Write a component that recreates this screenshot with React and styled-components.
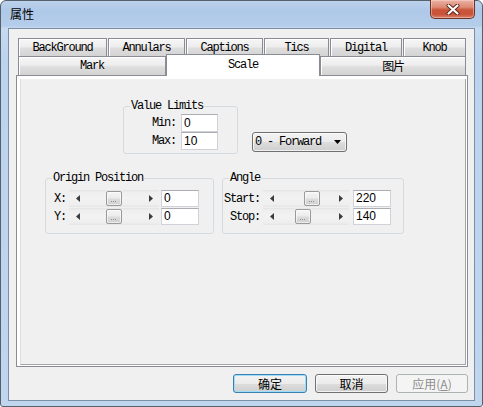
import React from 'react';
import styled, { createGlobalStyle } from 'styled-components';

const MONO = `"Liberation Mono", "Noto Sans CJK SC", monospace`;
const CJK = `"Noto Sans CJK SC", "Liberation Sans", sans-serif`;
const SANS = `"Liberation Sans", Arial, sans-serif`;

const Global = createGlobalStyle`
  html, body { margin: 0; padding: 0; background: #fff; }
  body { width: 483px; height: 407px; overflow: hidden; font-family: ${MONO}; }
  * { box-sizing: border-box; }
`;

const Window = styled.div`
  width: 483px;
  height: 407px;
  border: 1px solid #56606c;
  border-radius: 6px 6px 3px 3px;
  background: linear-gradient(180deg, #bcd2ec 0px, #aec8e7 10px, #b4cdea 25px, #c6daf0 27px, #bcd3ee 60px, #c0d6ef 100%);
  padding: 0 7px 5px 7px;
  display: flex;
  flex-direction: column;
`;

const TitleBar = styled.div`
  height: 27px;
  display: flex;
  align-items: flex-start;
  justify-content: space-between;
`;

const TitleText = styled.div`
  font-family: ${CJK};
  font-size: 12px;
  line-height: 26px;
  padding-left: 2px;
  color: #000;
`;

const CloseButton = styled.div`
  width: 45px;
  height: 19px;
  margin-top: -1px;
  border: 1px solid #6b3326;
  border-top: none;
  border-radius: 0 0 5px 5px;
  background: linear-gradient(180deg, #eab3a6 0%, #dc8a74 40%, #c95538 55%, #c9533a 80%, #d9826b 100%);
  box-shadow: inset 0 0 0 1px rgba(255, 220, 210, 0.45);
  display: flex;
  align-items: center;
  justify-content: center;
`;

const Client = styled.div`
  flex: 1;
  border: 1px solid #7d8fa6;
  background: #f0f0f0;
  display: flex;
  flex-direction: column;
  padding: 9px 0 0 7px;
`;

const TabStrip = styled.div`
  width: 452px;
  padding-left: 2px;
  display: flex;
  flex-direction: column;
`;

const TabRow = styled.div`
  display: flex;
  gap: ${(p) => p.$gap}px;
  height: ${(p) => p.$h}px;
  align-items: flex-start;
`;

const Tab = styled.div`
  width: ${(p) => p.$w}px;
  height: ${(p) => (p.$selected ? p.$h + 3 : p.$h)}px;
  margin-top: ${(p) => (p.$selected ? -2 : 0)}px;
  position: ${(p) => (p.$selected ? 'relative' : 'static')};
  z-index: ${(p) => (p.$selected ? 2 : 'auto')};
  border: 1px solid #898c95;
  border-bottom: none;
  background: ${(p) =>
    p.$selected
      ? '#ffffff'
      : 'linear-gradient(180deg, #f6f6f6 0%, #ededed 45%, #dedede 55%, #d3d3d3 100%)'};
  box-shadow: ${(p) => (p.$selected ? 'none' : 'inset 1px 1px 0 #fff')};
  display: flex;
  align-items: center;
  justify-content: center;
  font-family: ${MONO};
  font-size: 12px;
  letter-spacing: -1.2px;
  color: #000;
  padding-bottom: ${(p) => (p.$selected ? 1 : 0)}px;
`;

const Panel = styled.div`
  width: 452px;
  height: 292px;
  border: 1px solid #898c95;
  background: #fff;
  padding: 3px 1px 1px 3px;
  display: flex;
`;

const Page = styled.div`
  flex: 1;
  background: #f0f0f0;
  border-left: 1px solid #dcdcdc;
  border-right: 1px solid #a4a4a4;
  border-bottom: 1px solid #a4a4a4;
  display: flex;
  flex-direction: column;
`;

const PageRow = styled.div`
  display: flex;
  align-items: flex-end;
  gap: ${(p) => p.$gap}px;
  padding-left: ${(p) => p.$left}px;
  margin-top: ${(p) => p.$top}px;
`;

const Group = styled.fieldset`
  margin: 0;
  padding: 0;
  min-width: 0;
  width: ${(p) => p.$w}px;
  border: 1px solid #d5dadf;
  border-radius: 3px;
`;

const Legend = styled.legend`
  margin-left: 6px;
  padding: 0 1px;
  font-family: ${MONO};
  font-size: 12px;
  letter-spacing: -1.2px;
  line-height: 14px;
  color: #000;
`;

const GroupBody = styled.div`
  display: flex;
  flex-direction: column;
  gap: ${(p) => p.$gap}px;
  padding: ${(p) => p.$pad};
`;

const FieldRow = styled.div`
  display: flex;
  align-items: center;
  height: ${(p) => p.$h}px;
`;

const Label = styled.span`
  width: ${(p) => p.$w}px;
  margin-right: ${(p) => p.$gap}px;
  text-align: right;
  font-family: ${MONO};
  font-size: 12px;
  letter-spacing: -1.2px;
  white-space: nowrap;
  color: #000;
`;

const Edit = styled.div`
  width: ${(p) => p.$w}px;
  height: ${(p) => p.$h}px;
  margin-left: ${(p) => p.$gap || 0}px;
  background: #fff;
  border: 1px solid #cfd2d8;
  border-top-color: #abadb3;
  font-family: ${SANS};
  font-size: 12px;
  line-height: ${(p) => p.$h - 2}px;
  padding-left: 2px;
  color: #000;
`;

const Scroll = styled.div`
  width: ${(p) => p.$w}px;
  height: 17px;
  display: flex;
  align-items: center;
  background: linear-gradient(180deg, #e4e4e4 0%, #efefef 15%, #f2f2f2 50%, #efefef 85%, #e4e4e4 100%);
`;

const ScrollArrow = styled.div`
  width: 17px;
  height: 17px;
  display: flex;
  align-items: center;
  justify-content: center;
`;

const ScrollTrack = styled.div`
  flex: 1;
  height: 17px;
  display: flex;
  align-items: center;
`;

const Thumb = styled.div`
  width: 16px;
  height: 15px;
  border: 1px solid #9a9a9a;
  border-radius: 2px;
  background: linear-gradient(180deg, #f5f5f5 0%, #ececec 45%, #dcdcdc 55%, #d0d0d0 100%);
  box-shadow: inset 0 0 0 1px rgba(255, 255, 255, 0.6);
  display: flex;
  align-items: flex-end;
  justify-content: center;
  padding-bottom: 3px;
`;

const Grip = styled.div`
  width: 6px;
  height: 1px;
  background: repeating-linear-gradient(90deg, #8f8f8f 0 1px, transparent 1px 2px);
`;

const Combo = styled.div`
  width: 95px;
  height: 20px;
  margin-bottom: 2px;
  border: 1px solid #707070;
  border-radius: 3px;
  background: linear-gradient(180deg, #f3f3f3 0%, #ebebeb 50%, #dddddd 50%, #cfcfcf 100%);
  box-shadow: inset 0 0 0 1px rgba(255, 255, 255, 0.7);
  display: flex;
  align-items: center;
  justify-content: space-between;
  padding: 0 5px 0 2px;
  font-family: ${MONO};
  font-size: 12px;
  letter-spacing: -1.2px;
  color: #000;
`;

const ButtonRow = styled.div`
  width: 452px;
  margin-top: 7px;
  display: flex;
  justify-content: flex-end;
  gap: 8px;
`;

const Button = styled.div`
  width: ${(p) => p.$w}px;
  height: 19px;
  border-radius: 3px;
  border: 1px solid ${(p) => (p.$default ? '#3c7fb1' : p.$disabled ? '#adb2b5' : '#707070')};
  background: ${(p) =>
    p.$disabled
      ? '#f4f4f4'
      : 'linear-gradient(180deg, #f3f3f3 0%, #ebebeb 50%, #dddddd 50%, #cfcfcf 100%)'};
  box-shadow: ${(p) =>
    p.$default
      ? 'inset 0 0 0 1px #9fdcf8'
      : p.$disabled
      ? 'none'
      : 'inset 0 0 0 1px rgba(255,255,255,0.7)'};
  display: flex;
  align-items: center;
  justify-content: center;
  font-family: ${CJK};
  font-size: 12px;
  line-height: 17px;
  color: ${(p) => (p.$disabled ? '#8d8d8d' : '#000')};
`;

const Arrow = ({ dir }) => (
  <svg width="4" height="7" viewBox="0 0 4 7">
    {dir === 'left' ? (
      <polygon points="4,0 4,7 0,3.5" fill="#3c3c3c" />
    ) : (
      <polygon points="0,0 0,7 4,3.5" fill="#3c3c3c" />
    )}
  </svg>
);

const ScrollBar = ({ w, value, min, max }) => {
  const trackLen = w - 34 - 16;
  const offset = Math.round(((value - min) / (max - min)) * trackLen);
  return (
    <Scroll $w={w}>
      <ScrollArrow>
        <Arrow dir="left" />
      </ScrollArrow>
      <ScrollTrack>
        <Thumb style={{ marginLeft: offset }}>
          <Grip />
        </Thumb>
      </ScrollTrack>
      <ScrollArrow>
        <Arrow dir="right" />
      </ScrollArrow>
    </Scroll>
  );
};

const row1 = [
  ['BackGround', 89],
  ['Annulars', 77],
  ['Captions', 77],
  ['Tics', 65],
  ['Digital', 72],
  ['Knob', 63],
];
const row2 = [
  ['Mark', 148, false],
  ['Scale', 154, true],
  ['图片', 146, false],
];

export default function App() {
  return (
    <>
      <Global />
      <Window>
        <TitleBar>
          <TitleText>属性</TitleText>
          <CloseButton>
            <svg width="14" height="11" viewBox="0 0 14 11">
              <path d="M2.5 1.5 L11.5 9.5 M11.5 1.5 L2.5 9.5" stroke="#5a2418" strokeWidth="4" strokeLinecap="round" />
              <path d="M2.5 1.5 L11.5 9.5 M11.5 1.5 L2.5 9.5" stroke="#ffffff" strokeWidth="2.2" strokeLinecap="round" />
            </svg>
          </CloseButton>
        </TitleBar>
        <Client>
          <TabStrip>
            <TabRow $h={18} $gap={1}>
              {row1.map(([t, w]) => (
                <Tab key={t} $w={w} $h={18}>
                  {t}
                </Tab>
              ))}
            </TabRow>
            <TabRow $h={19} $gap={0}>
              {row2.map(([t, w, sel]) => (
                <Tab key={t} $w={w} $h={19} $selected={sel}>
                  {t}
                </Tab>
              ))}
            </TabRow>
          </TabStrip>
          <Panel>
            <Page>
              <PageRow $left={102} $top={20} $gap={14}>
                <Group $w={115}>
                  <Legend>Value Limits</Legend>
                  <GroupBody $gap={0} $pad="1px 0 3px 28px">
                    <FieldRow $h={18}>
                      <Label $w={24} $gap={5}>Min:</Label>
                      <Edit $w={37} $h={18}>0</Edit>
                    </FieldRow>
                    <FieldRow $h={18}>
                      <Label $w={24} $gap={5}>Max:</Label>
                      <Edit $w={37} $h={18}>10</Edit>
                    </FieldRow>
                  </GroupBody>
                </Group>
                <Combo>
                  <span>0 - Forward</span>
                  <svg width="7" height="4" viewBox="0 0 7 4">
                    <polygon points="0,0 7,0 3.5,4" fill="#000" />
                  </svg>
                </Combo>
              </PageRow>
              <PageRow $left={24} $top={17} $gap={8}>
                <Group $w={169}>
                  <Legend>Origin Position</Legend>
                  <GroupBody $gap={1} $pad="5px 0 8px 8px">
                    <FieldRow $h={17}>
                      <Label $w={12} $gap={3}>X:</Label>
                      <ScrollBar w={90} value={0} min={-100} max={100} />
                      <Edit $w={38} $h={17} $gap={2}>0</Edit>
                    </FieldRow>
                    <FieldRow $h={17}>
                      <Label $w={12} $gap={3}>Y:</Label>
                      <ScrollBar w={90} value={0} min={-100} max={100} />
                      <Edit $w={38} $h={17} $gap={2}>0</Edit>
                    </FieldRow>
                  </GroupBody>
                </Group>
                <Group $w={182}>
                  <Legend>Angle</Legend>
                  <GroupBody $gap={1} $pad="5px 0 8px 1px">
                    <FieldRow $h={17}>
                      <Label $w={36} $gap={3}>Start:</Label>
                      <ScrollBar w={86} value={220} min={0} max={330} />
                      <Edit $w={38} $h={17} $gap={4}>220</Edit>
                    </FieldRow>
                    <FieldRow $h={17}>
                      <Label $w={36} $gap={3}>Stop:</Label>
                      <ScrollBar w={86} value={140} min={0} max={330} />
                      <Edit $w={38} $h={17} $gap={4}>140</Edit>
                    </FieldRow>
                  </GroupBody>
                </Group>
              </PageRow>
            </Page>
          </Panel>
          <ButtonRow>
            <Button $w={74} $default>确定</Button>
            <Button $w={73}>取消</Button>
            <Button $w={72} $disabled>
              应用(<u>A</u>)
            </Button>
          </ButtonRow>
        </Client>
      </Window>
    </>
  );
}
